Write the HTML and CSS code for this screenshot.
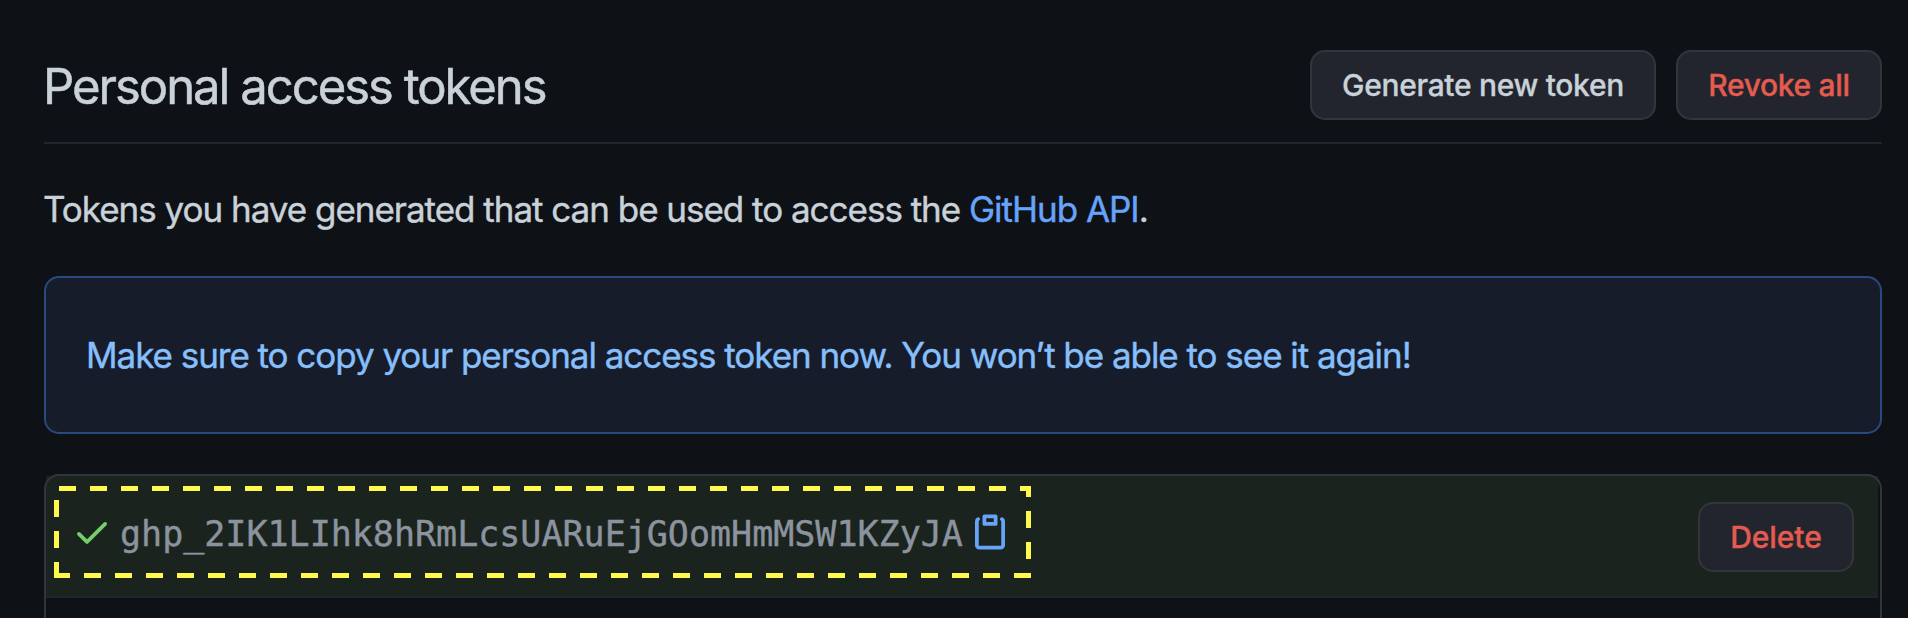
FILE: index.html
```
<!DOCTYPE html>
<html lang="en">
<head>
<meta charset="utf-8">
<title>Personal access tokens</title>
<link rel="stylesheet" href="styles.css">
</head>
<body>
<main class="page">
  <header class="subhead">
    <h1 class="title">Personal access tokens</h1>
    <div class="actions">
      <button class="btn btn-generate">Generate new token</button>
      <button class="btn btn-danger btn-revoke">Revoke all</button>
    </div>
  </header>
  <p class="intro">Tokens you have generated that can be used to access the <a class="link">GitHub API</a>.</p>
  <div class="flash">Make sure to copy your personal access token now. You won’t be able to see it again!</div>
  <section class="box">
    <div class="row">
      <svg class="icon check" viewBox="0 0 16 16"><path d="M13.78 4.22a.75.75 0 010 1.06l-7.25 7.25a.75.75 0 01-1.06 0L2.22 9.28a.75.75 0 011.06-1.06L6 10.94l6.72-6.72a.75.75 0 011.06 0z"/></svg>
      <code class="token">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</code>
      <svg class="icon copy" viewBox="0 0 16 16"><path d="M5.75 1a.75.75 0 00-.75.75v3c0 .414.336.75.75.75h4.5a.75.75 0 00.75-.75v-3a.75.75 0 00-.75-.75h-4.5zm.75 3V2.5h3V4h-3zm-2.874-.467a.75.75 0 00-.752-1.298A1.75 1.75 0 002 3.75v9.5c0 .966.784 1.75 1.75 1.75h8.5A1.75 1.75 0 0014 13.25v-9.5a1.75 1.75 0 00-.874-1.515.75.75 0 10-.752 1.298.25.25 0 01.126.217v9.5a.25.25 0 01-.25.25h-8.5a.25.25 0 01-.25-.25v-9.5a.25.25 0 01.126-.217z"/></svg>
      <button class="btn btn-danger btn-delete">Delete</button>
    </div>
    <svg class="marker" viewBox="0 0 977 92"><path stroke-dasharray="17 14" d="M5 2.5H974.500V89.500H0"/><path d="M2.500 92V76M2.500 62V45M2.500 31V14"/></svg>
  </section>
</main>
</body>
</html>
```
FILE: styles.css
```
* { box-sizing: border-box; }
body {
  margin: 0;
  background: #0e1116;
  color: #c9d1d9;
  font-family: Inter, "Liberation Sans", sans-serif;
}
.page {
  height: 618px;
  padding: 50px 26px 0 44px;
  overflow: hidden;
}
.subhead {
  display: flex;
  justify-content: space-between;
  height: 94px;
  border-bottom: 2px solid #21262d;
}
.title {
  margin: 7px 0 0 -1px;
  font-size: 49px;
  font-weight: 400;
  line-height: 60px;
  letter-spacing: -2.02px;
  white-space: nowrap;
  -webkit-text-stroke: 0.5px currentColor;
}
.actions { display: flex; gap: 20px; }
.btn {
  height: 70px;
  padding: 0;
  border: 2px solid #32363c;
  border-radius: 15px;
  background: #22252d;
  color: #c9d1d9;
  font: 500 30px/60px Inter, "Liberation Sans", sans-serif;
  letter-spacing: -0.32px;
  white-space: nowrap;
  -webkit-text-stroke: 0.3px currentColor;
}
.btn-danger { color: #e65b50; }
.btn-generate { width: 346px; }
.btn-revoke { width: 206px; }
.btn-delete { width: 156px; margin: 2px 0 0 auto; letter-spacing: -0.1px; }
.intro {
  margin: 39px 0 0 -1px;
  font-size: 35px;
  line-height: 52px;
  letter-spacing: -1.02px;
  white-space: nowrap;
  -webkit-text-stroke: 0.4px currentColor;
}
.link { color: #66a4fa; }
.flash {
  height: 158px;
  margin-top: 41px;
  padding: 51px 40px;
  border: 2px solid #2a4a7f;
  border-radius: 15px;
  background: #161c2a;
  color: #87bffb;
  font-size: 35px;
  line-height: 52px;
  letter-spacing: -1.04px;
  white-space: nowrap;
  -webkit-text-stroke: 0.4px currentColor;
}
.box {
  position: relative;
  height: 180px;
  margin-top: 40px;
  padding: 2px 4px 0 2px;
}
.box::after {
  content: "";
  position: absolute;
  inset: 0;
  border: 2px solid #32363c;
  border-radius: 15px;
}
.row {
  display: flex;
  align-items: center;
  height: 122px;
  padding: 0 24px 0 26px;
  border-bottom: 2px solid #21262d;
  background: #1b231e;
}
.icon { flex: none; width: 40px; height: 40px; margin-top: -8px; }
.check { fill: #75ce69; }
.copy { margin-left: 7px; fill: #66a4fa; }
.token {
  margin: -5px 0 0 8px;
  color: #8b949e;
  font: 35px/52px "DejaVu Sans Mono", monospace;
  -webkit-text-stroke: 0.4px currentColor;
}
.marker {
  position: absolute;
  left: 10px;
  top: 12px;
  width: 977px;
  height: 92px;
  fill: none;
  stroke: #fff84f;
  stroke-width: 5;
}
```
